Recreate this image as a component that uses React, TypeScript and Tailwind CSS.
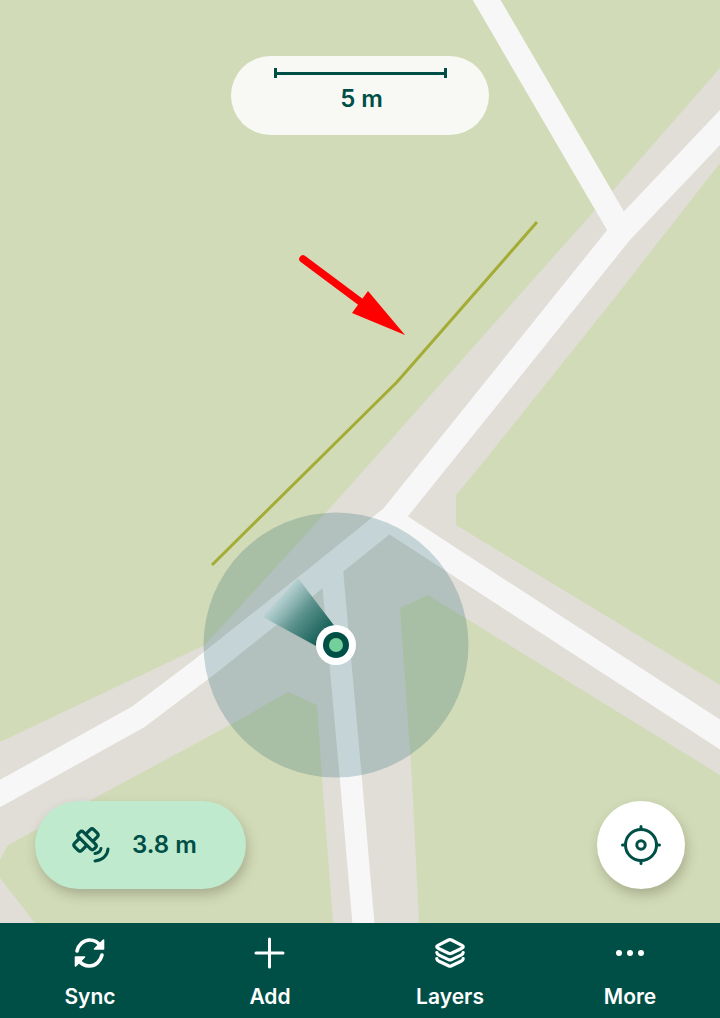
import React from "react";

const DARK = "#004f47";

function MapCanvas() {
  return (
    <svg viewBox="0 0 720 923" className="absolute inset-0 w-full h-full">
      <defs>
        <linearGradient id="cone" gradientUnits="userSpaceOnUse" x1="332" y1="642" x2="270" y2="588">
          <stop offset="0" stopColor="#004f47" stopOpacity="1" />
          <stop offset="0.5" stopColor="#5c928d" stopOpacity="1" />
          <stop offset="0.78" stopColor="#a8c8c8" stopOpacity="0.9" />
          <stop offset="1" stopColor="#d0e0e0" stopOpacity="0" />
        </linearGradient>
      </defs>
      <rect width="720" height="923" fill="#d2dbb8" />
      {/* paved area */}
      <polygon
        fill="#e0ded7"
        points="720,68 615,188 597,208 515,300 340,497 205,645 0,742 0,860 8,845 230,725 288,692 317,705 323,790 333,923 419,923 412,780 400,608 428,595 720,775 720,685 456,525 456,495 485,460 613,300 720,163"
      />
      <polygon fill="#e0ded7" points="0,878 35,923 0,923" />
      {/* road centre strips */}
      <g fill="none" stroke="#f7f7f7" strokeWidth="24" strokeLinejoin="bevel">
        <polyline points="730,117 621,232 392,517 310,583 203,668 138,717 -10,799" />
        <polyline points="395,523 730,741" strokeWidth="25" />
        <polyline points="332,570 351,780 364,930" strokeWidth="22" />
        <polyline points="482,-8 622,232" />
      </g>
      {/* drawn line */}
      <polyline points="537,222 397,382 212,565" fill="none" stroke="#a3ad36" strokeWidth="3" />
      {/* red arrow */}
      <line x1="303" y1="259" x2="362" y2="303" stroke="#ff0000" strokeWidth="7.5" strokeLinecap="round" />
      <polygon points="405,335 368,291 352,313" fill="#ff0000" />
      {/* accuracy circle */}
      <circle cx="336" cy="645" r="132.5" fill="#004f5a" fillOpacity="0.2" />
      {/* heading cone */}
      <polygon points="298,578 263,617 316,646 336,628" fill="url(#cone)" />
      {/* position dot */}
      <circle cx="336" cy="645" r="20" fill="#ffffff" />
      <circle cx="336" cy="645" r="13" fill={DARK} />
      <circle cx="336" cy="645" r="7" fill="#73d09a" />
    </svg>
  );
}

function SatelliteIcon() {
  return (
    <svg width="38" height="36" viewBox="0 0 38 36" fill="none" stroke={DARK} strokeWidth="3.2" strokeLinecap="round" strokeLinejoin="round">
      <rect x="15" y="3" width="10" height="10" rx="2.5" transform="rotate(45 20 8)" />
      <rect x="3" y="13" width="10" height="10" rx="2.5" transform="rotate(45 8 18)" />
      <rect x="4" y="10" width="22" height="7" rx="2.5" transform="rotate(45 15 13.5)" fill="#bfeacd" />
      <path d="M23 26.5 C26 26 28.5 24.5 29 21.5" strokeWidth="3" />
      <path d="M23 34 C30 33.5 35.5 29 36 22" strokeWidth="3" />
    </svg>
  );
}

function LocateIcon() {
  return (
    <svg width="40" height="40" viewBox="0 0 40 40" fill="none" stroke={DARK} strokeWidth="3" strokeLinecap="round">
      <circle cx="20" cy="20" r="15.5" />
      <circle cx="20" cy="20" r="4.2" />
      <path d="M20 1.5V4.5M20 35.5v3M1.5 20H4.5M35.5 20h3" />
    </svg>
  );
}

function SyncIcon() {
  return (
    <svg width="32" height="32" viewBox="0 0 32 32" fill="none" stroke="#fff" strokeWidth="3.6" strokeLinecap="round" strokeLinejoin="round">
      <path d="M3 14C4.5 7.5 9.5 3 15.5 3c4.5 0 8.5 2 11 6" />
      <path d="M28 18C26.5 24.5 21.5 29 15.5 29c-4.5 0-8.5-2-11-6" />
      <path d="M29.5 3V12H20.5Z" fill="#fff" strokeWidth="1.6" />
      <path d="M1.5 29V20H10.5Z" fill="#fff" strokeWidth="1.6" />
    </svg>
  );
}

function PlusIcon() {
  return (
    <svg width="32" height="32" viewBox="0 0 32 32" fill="none" stroke="#fff" strokeWidth="3" strokeLinecap="round">
      <path d="M15.5 2V30M2 16H29" />
    </svg>
  );
}

function LayersIcon() {
  return (
    <svg width="32" height="32" viewBox="0 0 32 32" fill="none" stroke="#fff" strokeWidth="3.2" strokeLinecap="round" strokeLinejoin="round">
      <path d="M14.5 3 Q16 2.3 17.5 3 L28 8.4 Q30.5 9.8 28 11.2 L17.5 16.2 Q16 17 14.5 16.2 L4 11.2 Q1.5 9.8 4 8.4 Z" />
      <path d="M2.8 15.5 C3 17 4 17.6 5 18.1 L14.5 22.6 Q16 23.3 17.5 22.6 L27 18.1 C28 17.6 29 17 29.2 15.5" />
      <path d="M2.8 21.7 C3 23.2 4 23.8 5 24.3 L14.5 28.8 Q16 29.5 17.5 28.8 L27 24.3 C28 23.8 29 23.2 29.2 21.7" />
    </svg>
  );
}

function MoreIcon() {
  return (
    <svg width="32" height="32" viewBox="0 0 32 32" fill="#fff">
      <circle cx="5" cy="16" r="3" />
      <circle cx="16" cy="16" r="3" />
      <circle cx="27" cy="16" r="3" />
    </svg>
  );
}

function NavItem({ icon, label }: { icon: React.ReactNode; label: string }) {
  return (
    <div className="flex flex-1 flex-col items-center pt-[14px]">
      <div className="flex h-[32px] w-[32px] items-center justify-center">{icon}</div>
      <span className="mt-[15px] text-[21px] font-semibold leading-[26px] text-white">{label}</span>
    </div>
  );
}

export default function App() {
  return (
    <div
      className="flex h-[1018px] w-[720px] flex-col overflow-hidden"
      style={{ fontFamily: "Inter, 'Noto Sans', sans-serif" }}
    >
      <div className="relative flex-1 overflow-hidden">
        <MapCanvas />

        <div className="absolute left-[231px] top-[56px] flex h-[79px] w-[258px] flex-col items-center rounded-full bg-[#f8f9f4] pt-[12px] pl-[3px]">
          <div className="-ml-[3px] flex h-[10px] w-[173px] items-center justify-between border-x-[3px] border-[#004f47]">
            <div className="h-[3px] w-full bg-[#004f47]" />
          </div>
          <span className="mt-[3px] text-[24px] font-semibold leading-[36px] text-[#004f47]">5 m</span>
        </div>

        <div className="absolute left-[35px] top-[801px] flex h-[88px] w-[211px] items-center rounded-full bg-[#bfeacd] pl-[37px] shadow-[2px_6px_12px_rgba(60,60,40,0.28)]">
          <SatelliteIcon />
          <span className="ml-[22px] text-[24px] font-semibold leading-none text-[#004f47]">3.8 m</span>
        </div>

        <div className="absolute left-[597px] top-[801px] flex h-[88px] w-[88px] items-center justify-center rounded-full bg-white shadow-[2px_6px_12px_rgba(60,60,40,0.28)]">
          <LocateIcon />
        </div>
      </div>

      <nav className="flex h-[95px] bg-[#004f47]">
        <NavItem icon={<SyncIcon />} label="Sync" />
        <NavItem icon={<PlusIcon />} label="Add" />
        <NavItem icon={<LayersIcon />} label="Layers" />
        <NavItem icon={<MoreIcon />} label="More" />
      </nav>
    </div>
  );
}
